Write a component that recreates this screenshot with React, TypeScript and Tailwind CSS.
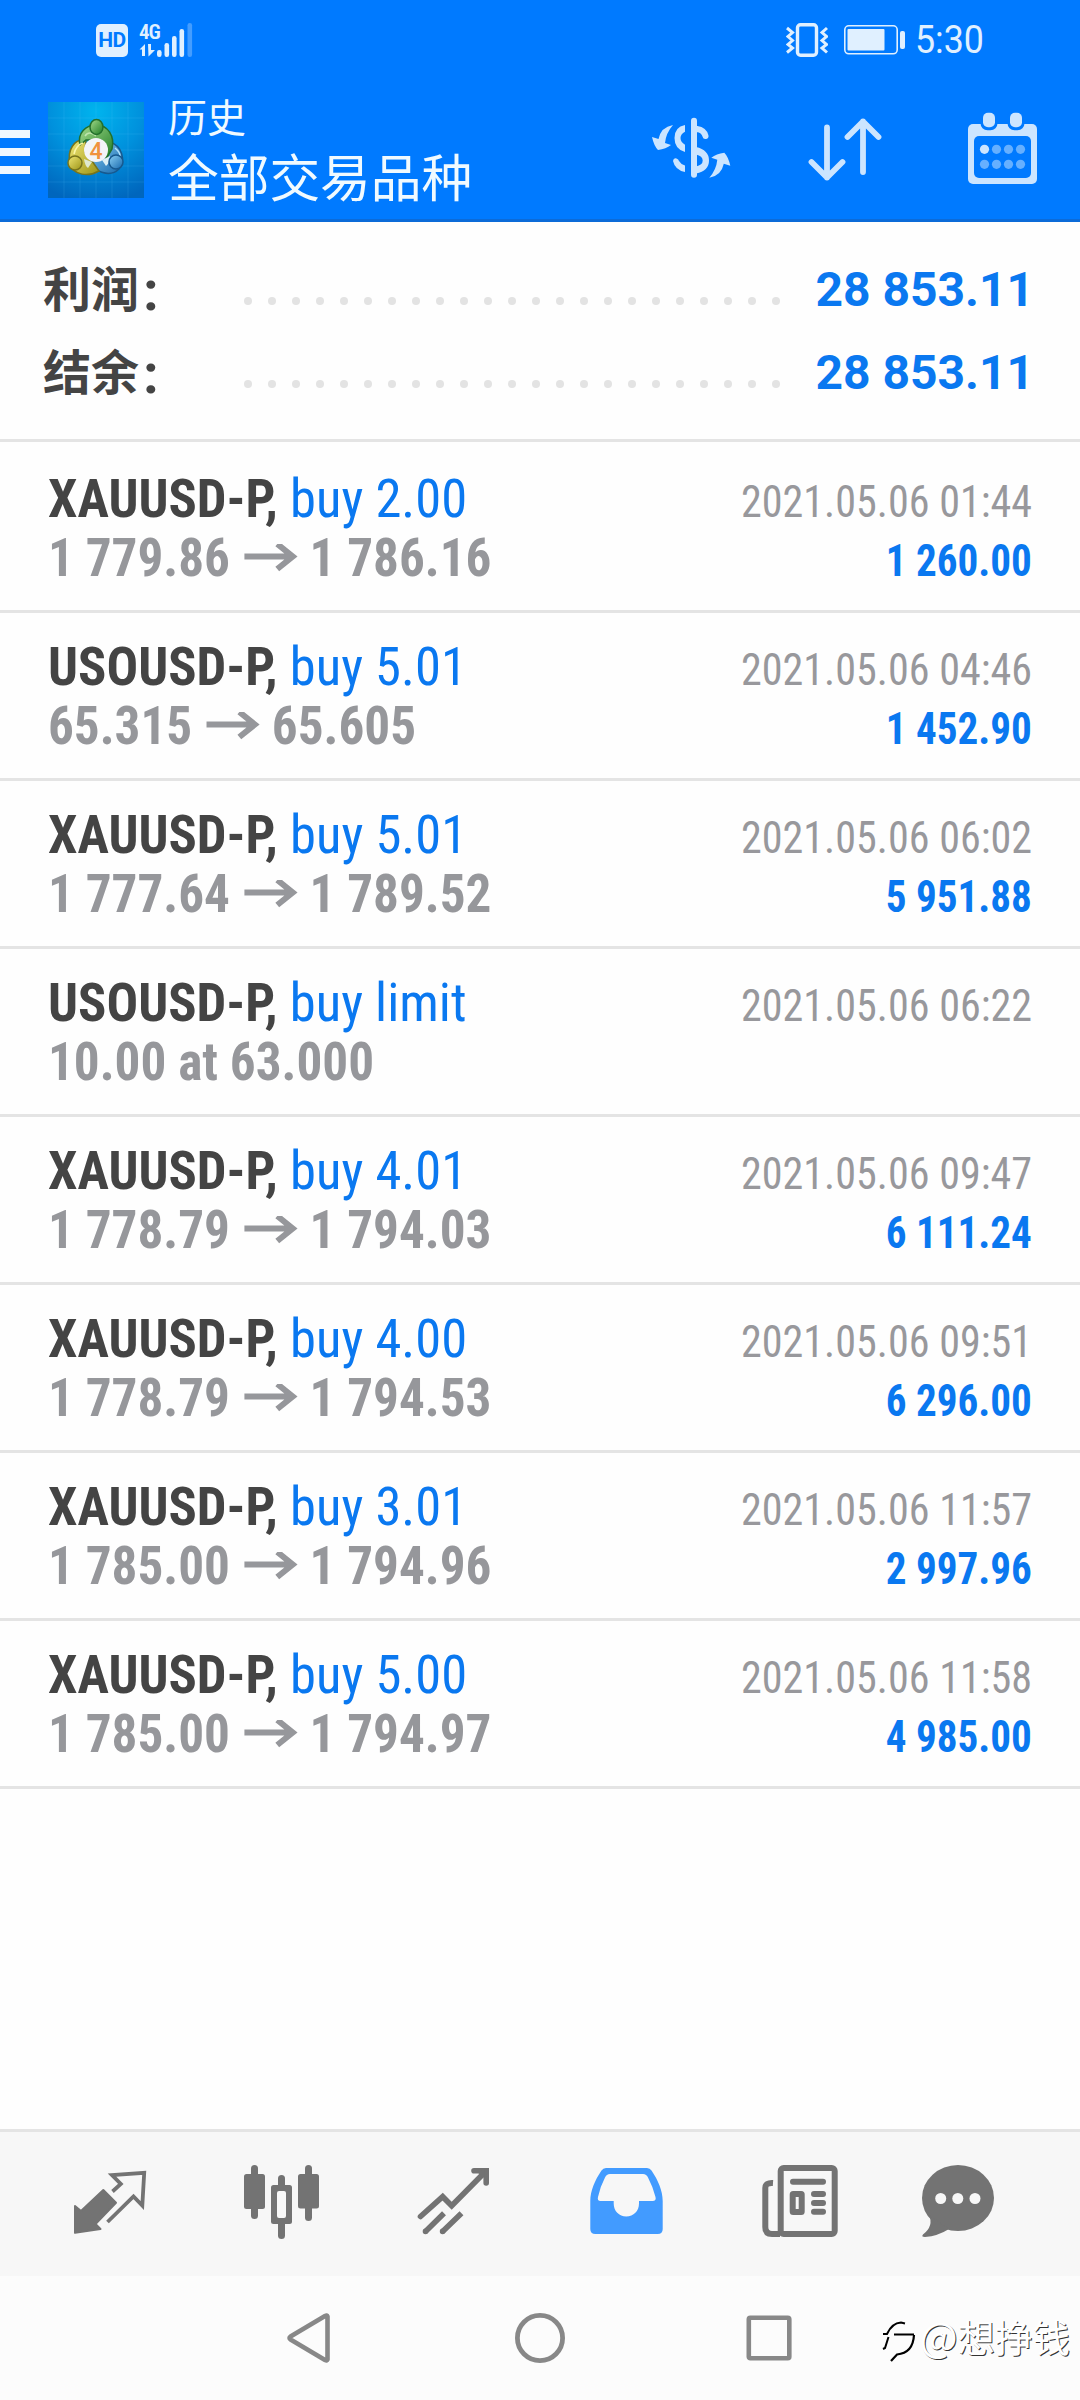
import React from "react";

type Deal = {
  symbol: string;
  action: string;
  from: string;
  to?: string;
  time: string;
  profit?: string;
};

const deals: Deal[] = [
  { symbol: "XAUUSD-P", action: "buy 2.00", from: "1 779.86", to: "1 786.16", time: "2021.05.06 01:44", profit: "1 260.00" },
  { symbol: "USOUSD-P", action: "buy 5.01", from: "65.315", to: "65.605", time: "2021.05.06 04:46", profit: "1 452.90" },
  { symbol: "XAUUSD-P", action: "buy 5.01", from: "1 777.64", to: "1 789.52", time: "2021.05.06 06:02", profit: "5 951.88" },
  { symbol: "USOUSD-P", action: "buy limit", from: "10.00 at 63.000", time: "2021.05.06 06:22" },
  { symbol: "XAUUSD-P", action: "buy 4.01", from: "1 778.79", to: "1 794.03", time: "2021.05.06 09:47", profit: "6 111.24" },
  { symbol: "XAUUSD-P", action: "buy 4.00", from: "1 778.79", to: "1 794.53", time: "2021.05.06 09:51", profit: "6 296.00" },
  { symbol: "XAUUSD-P", action: "buy 3.01", from: "1 785.00", to: "1 794.96", time: "2021.05.06 11:57", profit: "2 997.96" },
  { symbol: "XAUUSD-P", action: "buy 5.00", from: "1 785.00", to: "1 794.97", time: "2021.05.06 11:58", profit: "4 985.00" },
];

const totals = [
  { label: "利润", value: "28 853.11" },
  { label: "结余", value: "28 853.11" },
];

const StatusBar = () => (
  <div className="flex h-[80px] items-center justify-between pr-[97px] pl-[96px] text-[#e0f0ff]">
    <div className="flex items-center">
      <div className="flex h-[33px] w-[32px] items-center justify-center rounded-[5px] bg-[#e0f0ff] font-['Roboto',sans-serif] text-[21px] leading-none font-bold tracking-[-0.5px] text-[#007aff]">
        HD
      </div>
      <div className="ml-[11px] flex w-[18px] flex-col">
        <span className="font-['Roboto_Condensed',sans-serif] text-[21px] leading-[19px] font-semibold tracking-[-1px]">
          4G
        </span>
        <svg className="mt-px h-[14px] w-[18px]" viewBox="0 0 18 14" fill="currentColor">
          <path d="M0.5 6.5 L6 1 V13 H3 V6.5Z" />
          <path d="M9 1 H12 V7 H16 L9.5 13.5Z" />
        </svg>
      </div>
      <svg className="h-[34px] w-[36px]" viewBox="0 0 36 34" fill="currentColor">
        <rect x="0" y="27" width="4.6" height="7" rx="2.2" />
        <rect x="7.5" y="20" width="4.6" height="14" rx="2.2" />
        <rect x="15" y="13" width="4.6" height="21" rx="2.2" />
        <rect x="22.5" y="6" width="4.6" height="28" rx="2.2" />
        <rect x="30.5" y="0" width="4.6" height="34" rx="2.2" opacity="0.3" />
      </svg>
    </div>
    <div className="flex items-center">
      <svg className="h-[34px] w-[42px]" viewBox="0 0 42 34" fill="none" stroke="currentColor" strokeWidth="3">
        <rect x="11.5" y="1.7" width="19" height="30.6" rx="3" strokeWidth="3.4" />
        <path d="M1 5 L6.5 9.5 L2 13.5 L6.5 17.5 L2 21.5 L6.5 25 L1 29.5" />
        <path d="M41 5 L36 9.5 L40.5 13.5 L36 17.5 L40.5 21.5 L36 25 L41 29.5" />
      </svg>
      <svg className="ml-[16px] h-[30px] w-[62px]" viewBox="0 0 62 30" fill="currentColor">
        <rect x="0.8" y="0.8" width="52.4" height="28" rx="4" fill="none" stroke="currentColor" strokeWidth="1.6" />
        <rect x="3.5" y="4" width="37" height="21.5" rx="1" />
        <rect x="56" y="6" width="5" height="18" rx="2" />
      </svg>
      <span className="ml-[9px] w-[68px] origin-left scale-x-94 font-['Roboto',sans-serif] text-[38px] leading-[42px] whitespace-nowrap">
        5:30
      </span>
    </div>
  </div>
);

const AppLogo = () => (
  <svg className="h-[96px] w-[96px]" viewBox="0 0 96 96">
    <defs>
      <radialGradient id="sky" cx="0.5" cy="0.1" r="0.95">
        <stop offset="0" stopColor="#00b4ee" />
        <stop offset="0.5" stopColor="#0091dd" />
        <stop offset="1" stopColor="#0066bd" />
      </radialGradient>
      <linearGradient id="green" x1="0" y1="0" x2="1" y2="1">
        <stop offset="0" stopColor="#a5dc8d" />
        <stop offset="1" stopColor="#1f7d25" />
      </linearGradient>
      <linearGradient id="yellow" x1="0" y1="0" x2="1" y2="1">
        <stop offset="0" stopColor="#f0e775" />
        <stop offset="1" stopColor="#9c9417" />
      </linearGradient>
      <linearGradient id="blue" x1="0" y1="0" x2="1" y2="1">
        <stop offset="0" stopColor="#8bd0f5" />
        <stop offset="1" stopColor="#1668ad" />
      </linearGradient>
    </defs>
    <rect width="96" height="96" fill="url(#sky)" />
    <path
      d="M0 16H96M0 32H96M0 48H96M0 64H96M0 80H96M16 0V96M32 0V96M48 0V96M64 0V96M80 0V96"
      stroke="#5cc8ff"
      strokeOpacity="0.15"
      strokeWidth="1"
    />
    <g strokeWidth="1.5">
      <path d="M62 40C74 44 78 58 71 67C62 76 45 70 39 57L48 57L58 54Z" fill="url(#blue)" stroke="#17598f" />
      <path d="M38 38C26 36 19 49 22 61C25 74 41 75 51 69L44 59L37 50Z" fill="url(#yellow)" stroke="#77741c" />
      <path d="M48 23C60 23 67 34 64 47L58 57L53 38H38L32 43C29 31 38 23 48 23Z" fill="url(#green)" stroke="#23702c" />
      <path d="M36 57L44 60L40 66Q37 64 36 57Z" fill="#dfe9cf" stroke="none" />
      <path d="M54 58L62 54Q62 61 58 64Z" fill="#dceff5" stroke="none" />
      <path d="M37 34Q41 28 48 34" fill="none" stroke="#cdeebc" strokeOpacity="0.8" />
      <path d="M26 52Q28 43 35 41" fill="none" stroke="#fbf6a8" />
      <path d="M67 46Q72 50 72 54" fill="none" stroke="#b3e1fa" />
      <ellipse cx="48.5" cy="25" rx="6.5" ry="7.5" fill="url(#green)" stroke="#23702c" />
      <circle cx="27" cy="61" r="7" fill="url(#yellow)" stroke="#77741c" />
      <circle cx="68" cy="60" r="7" fill="url(#blue)" stroke="#17598f" />
      <circle cx="48" cy="48" r="12" fill="#f3f4f7" />
    </g>
    <text x="48" y="56.5" textAnchor="middle" fontFamily="Roboto" fontSize="23" fontWeight="500" fill="#f0923e">
      4
    </text>
  </svg>
);

const CurrencyIcon = () => (
  <svg className="size-[80px]" viewBox="0 0 80 80" fill="currentColor">
    <path d="M43 12.7V66.7M46 21Q53 22 54.5 28" fill="none" stroke="currentColor" strokeWidth="6" strokeLinecap="round" />
    <path d="M34 17Q23.5 19 23.5 30Q23.5 41 34 44V36.7Q29.5 34 29.5 30Q29.5 26 34 23.7Z" />
    <path d="M22 53Q22.5 49.5 25.5 50.5Q27.5 51 28 53Q30 56.5 34 57.5V64Q24 62 22 53Z" />
    <path d="M45 39Q58 42 58 52.5Q58 63 45 65.5V58.5Q51.7 57 51.7 52.5Q51.7 48 45 46.5Z" />
    <path d="M22 17Q10 19 7.5 31L1 29Q3 38 7 42Q15 41 20 37L14 35Q15 25 22 17Z" />
    <path
      d="M22 17Q10 19 7.5 31L1 29Q3 38 7 42Q15 41 20 37L14 35Q15 25 22 17Z"
      transform="rotate(180 40.15 43.35)"
    />
  </svg>
);

const SortIcon = () => (
  <svg
    className="size-[80px]"
    viewBox="0 0 80 80"
    fill="none"
    stroke="currentColor"
    strokeWidth="5.8"
    strokeLinecap="round"
    strokeLinejoin="round"
  >
    <path d="M20 19.5V69.5M4.5 54L20 69.5L35.5 54" />
    <path d="M56 64V13.5M40.5 29L56 13.5L71.5 29" />
  </svg>
);

const CalendarIcon = () => (
  <svg className="size-[80px]" viewBox="0 0 80 80" fill="currentColor">
    <rect x="5" y="16" width="69" height="60" rx="5" />
    <rect x="11" y="28" width="57" height="42" rx="5" fill="#007aff" />
    <rect x="18.5" y="3.2" width="15" height="18" rx="6" fill="#007aff" stroke="#007aff" strokeWidth="2" />
    <rect x="45.5" y="3.2" width="15" height="18" rx="6" fill="#007aff" stroke="#007aff" strokeWidth="2" />
    <rect x="20" y="4.7" width="12" height="14.5" rx="5" />
    <rect x="47" y="4.7" width="12" height="14.5" rx="5" />
    {[21.5, 33.5, 45.5, 57.5].map((cx) => (
      <g key={cx} fill="#66b0ff">
        <circle cx={cx} cy="41.3" r="4.6" fill={cx === 21.5 ? "#cce5ff" : "#66b0ff"} />
        <circle cx={cx} cy="56.3" r="4.6" />
      </g>
    ))}
  </svg>
);

const Header = () => (
  <header className="h-[222px] border-b-[3px] border-[#0c6bd8] bg-[#007aff]">
    <StatusBar />
    <div className="flex h-[139px] items-start">
      <div className="mt-[50px] flex w-[30px] flex-col gap-[10px]">
        <div className="h-[8px] bg-[#f0f8ff]" />
        <div className="h-[8px] bg-[#f0f8ff]" />
        <div className="h-[8px] bg-[#f0f8ff]" />
      </div>
      <div className="mt-[22px] ml-[18px]">
        <AppLogo />
      </div>
      <div className="mt-[11px] ml-[24px] flex flex-col font-['Noto_Sans_CJK_SC',sans-serif] text-[#f0faff]">
        <span className="text-[39px] leading-[48px]">历史</span>
        <span className="text-[50.7px] leading-[72px]">全部交易品种</span>
      </div>
      <div className="mt-[28px] mr-[37px] ml-auto flex gap-[76px] text-[#cce5ff]">
        <CurrencyIcon />
        <SortIcon />
        <CalendarIcon />
      </div>
    </div>
  </header>
);

const Summary = () => (
  <div className="border-b-[3px] border-[#e4e4e4] pt-[26px] pb-[25px]">
    {totals.map((item) => (
      <div key={item.label} className="flex h-[83px] items-center pr-[46px] pl-[43px]">
        <p className="flex w-[201px] items-center text-[48px] leading-none font-bold text-[#444]">
          <span className="-mt-[7px] font-['Noto_Sans_CJK_SC',sans-serif]">{item.label}</span>
          <span className="mt-[2px] ml-[4px] font-['Roboto',sans-serif] text-[56px]">:</span>
        </p>
        <div className="mt-[23px] flex gap-[16px]">
          {Array.from({ length: 23 }, (_, i) => (
            <span key={i} className="size-[8px] rounded-full bg-[#e3e3e3]" />
          ))}
        </div>
        <span className="ml-auto font-['Roboto',sans-serif] text-[48px] leading-[83px] font-bold text-[#0a78f0]">
          {item.value}
        </span>
      </div>
    ))}
  </div>
);

const DealRow = ({ deal }: { deal: Deal }) => (
  <div className="h-[168px] border-b-[3px] border-[#e4e4e4] pt-[24px] pr-[48px] pl-[48px] font-['Roboto_Condensed',sans-serif]">
    <div className="flex h-[59px] items-baseline justify-between text-[54px] leading-[59px]">
      <p className="origin-left scale-x-[0.974] text-[#0a78f0]">
        <span className="font-bold text-[#444]">{deal.symbol},</span> {deal.action}
      </p>
      <p className="origin-right scale-x-[0.936] text-[45px] text-[#98989c]">{deal.time}</p>
    </div>
    <div className="flex h-[59px] items-baseline justify-between text-[54px] leading-[59px]">
      <p className="flex origin-left scale-x-[0.948] items-baseline font-bold text-[#96979b]">
        {deal.from}
        {deal.to && (
          <>
            <svg
              className="mr-[12px] ml-[15px] h-[32px] w-[57px]"
              viewBox="0 0 54 32"
              preserveAspectRatio="none"
              fill="none"
              stroke="currentColor"
              strokeWidth="6"
            >
              <path d="M0 12.5H48M33 0L48.5 12.5L33 25" />
            </svg>
            {deal.to}
          </>
        )}
      </p>
      {deal.profit && (
        <p className="origin-right scale-x-[0.914] text-[45px] font-bold text-[#0a78f0]">{deal.profit}</p>
      )}
    </div>
  </div>
);

const TabBar = () => (
  <nav className="flex h-[147px] gap-[92px] border-t-[3px] border-[#e4e4e4] bg-[#f7f7f7] pt-[28px] pl-[70px] text-[#737373]">
    {/* Quotes */}
    <svg className="size-[80px] shrink-0" viewBox="0 0 80 80" fill="currentColor">
      <path
        d="M5 46L11 51L33.3 30L46 42.7L25.5 64L30.5 69L5 72.8Z"
        stroke="currentColor"
        strokeWidth="2"
        strokeLinejoin="round"
      />
      <path
        d="M42.5 31.5L50.8 24L42 15.2L74.2 12.8L72.3 45.5L63.5 36.5L37.5 62"
        fill="none"
        stroke="currentColor"
        strokeWidth="3.8"
      />
    </svg>
    {/* Charts */}
    <svg className="size-[80px] shrink-0" viewBox="0 0 80 80" fill="currentColor">
      <rect x="2" y="14" width="21" height="35" rx="2.5" />
      <rect x="9" y="5" width="7" height="54" rx="3.5" />
      <rect x="36" y="15" width="7" height="64" rx="3.5" />
      <rect x="29" y="25" width="21" height="39" rx="2.5" />
      <rect x="35" y="31" width="9" height="27" rx="2" fill="#f7f7f7" />
      <rect x="56" y="14" width="21" height="34.5" rx="2.5" />
      <rect x="63" y="5" width="7" height="56" rx="3.5" />
    </svg>
    {/* Trade */}
    <svg className="size-[80px] shrink-0" viewBox="0 0 80 80" fill="none" stroke="currentColor" strokeWidth="5.6">
      <path d="M6.5 56.5L28.7 36.7L37.7 45.7L72 11" strokeLinecap="round" />
      <path d="M60 10.8H72.2V23" strokeLinecap="round" />
      <path d="M70.5 9.5V18L63 12Z" fill="currentColor" stroke="none" />
      <path d="M11.5 71.5L30 53.3M28.6 71.5L47.5 53.3" />
      <path d="M11.5 71.5V71.4M28.6 71.5V71.4" strokeLinecap="round" />
    </svg>
    {/* History, the active tab */}
    <svg className="size-[80px] shrink-0 text-[#429bff]" viewBox="0 0 80 80" fill="currentColor" fillRule="evenodd">
      <path d="M20 8H61Q64 8 65.5 10.5C72 20 76.7 31 76.7 41V69Q76.7 74 71.7 74H9.3Q4.3 74 4.3 69V41C4.3 31 9 20 15.5 10.5Q17 8 20 8ZM24 14Q20.5 14 19 17.5Q14 27 12 37Q11 41 14.5 41H27.7V43.5C27.7 51 33 56.5 40.3 56.5S53 51 53 43.5V41H66.5Q70.5 41 69.5 37Q67 27 62 17.5Q60.5 14 57 14Z" />
    </svg>
    {/* News */}
    <svg
      className="size-[80px] shrink-0"
      viewBox="0 0 80 80"
      fill="none"
      stroke="currentColor"
      strokeWidth="6"
      strokeLinecap="round"
    >
      <rect x="22.7" y="8" width="54" height="66" rx="3" />
      <path d="M15 23Q7.3 22.5 7.3 28V67Q7.3 74 14 74H22" strokeLinecap="butt" />
      <path d="M35 21.7H65" />
      <path d="M56 34H65M56 43H65M56 51.7H65" />
      <rect x="34.7" y="34" width="9" height="18" rx="0.5" />
    </svg>
    {/* Messages */}
    <svg className="-ml-[12px] size-[80px] shrink-0" viewBox="0 0 80 80" fill="currentColor">
      <ellipse cx="40" cy="38" rx="36" ry="33" />
      <path d="M11 55Q16 66 5 74.5Q3 77 7 77Q20 76 31 69Z" />
      <g fill="#f7f7f7">
        <circle cx="22.7" cy="38.5" r="5.5" />
        <circle cx="39.8" cy="38.5" r="5.5" />
        <circle cx="57" cy="38.5" r="5.5" />
      </g>
    </svg>
  </nav>
);

const SystemNav = () => (
  <div className="relative flex h-[124px] items-center justify-center gap-[180px] bg-[#fcfcfc] text-[#888]">
    <svg className="size-[50px]" viewBox="0 0 50 50" fill="none" stroke="currentColor" strokeWidth="4.6" strokeLinejoin="round">
      <path d="M42.5 3.5V46.5Q42 48 40 47L5.5 26.5Q3.5 25 5.5 23.5L40 3Q42 2 42.5 3.5Z" />
    </svg>
    <svg className="size-[50px]" viewBox="0 0 50 50" fill="none" stroke="currentColor" strokeWidth="4.8">
      <circle cx="25" cy="25" r="22.6" />
    </svg>
    <svg className="size-[50px]" viewBox="0 0 50 50" fill="none" stroke="currentColor" strokeWidth="4.6">
      <rect x="3.8" y="4.8" width="40.5" height="40.5" rx="1.5" />
    </svg>
    {/* Author watermark over the corner */}
    <div className="absolute top-[31px] right-[10px] flex items-center">
      <svg className="mt-[11px] h-[46px] w-[38px] shrink-0" viewBox="0 0 38 46" fill="none" stroke="#000">
        <path d="M1 16H5Q10 5 19 4.5L23 5.5" strokeWidth="2" />
        <path d="M12 16.5H32" strokeWidth="2" />
        <path d="M1 31L3 30L6.5 19" strokeWidth="2" />
        <path d="M32 17Q31 35 15 36.5L9 43" strokeWidth="2.2" />
      </svg>
      <span className="font-['Noto_Sans_CJK_SC',sans-serif] text-[37.5px] leading-[46px] text-white [text-shadow:1px_1px_0px_#333]">
        <span className="text-[40px]">@</span>想挣钱
      </span>
    </div>
  </div>
);

export default function App() {
  return (
    <div className="flex h-[2400px] w-[1080px] flex-col overflow-hidden bg-[#fefefe]">
      <Header />
      <Summary />
      <main className="flex-1 pt-[3px]">
        {deals.map((deal, index) => (
          <DealRow key={index} deal={deal} />
        ))}
      </main>
      <TabBar />
      <SystemNav />
    </div>
  );
}
